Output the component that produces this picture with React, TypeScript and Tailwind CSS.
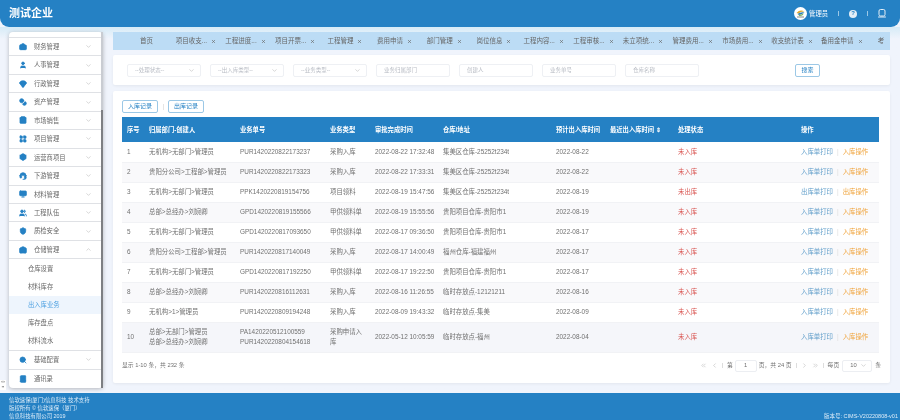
import { ChevronDown, ChevronUp, ChevronLeft, ChevronRight, ChevronsLeft, ChevronsRight, X, Briefcase, User, Gem, Coins, ShoppingBag, LayoutGrid, Box, Headset, Monitor, Users, Shield, Warehouse, SearchCheck, BookUser } from "lucide-react";

const font = "font-['Liberation_Sans','Noto_Sans_CJK_SC',sans-serif]";

const menuTop = [
  { name: "财务管理", icon: Briefcase },
  { name: "人事管理", icon: User },
  { name: "行政管理", icon: Gem },
  { name: "资产管理", icon: Coins },
  { name: "市场销售", icon: ShoppingBag },
  { name: "项目管理", icon: LayoutGrid },
  { name: "运营商项目", icon: Box },
  { name: "下游管理", icon: Headset },
  { name: "材料管理", icon: Monitor },
  { name: "工程队伍", icon: Users },
  { name: "质检安全", icon: Shield },
];

const subMenu = ["仓库设置", "材料库存", "出入库业务", "库存盘点", "材料流水"];

const tabs = ["项目收支...", "工程进度...", "项目开票...", "工程管理", "费用申请", "部门管理", "岗位信息", "工程内容...", "工程审核...", "未立项统...", "管理费用...", "市场费用...", "收支统计表", "备用金申请"];

const rows = [
  { id: 1, dept: ["无机构>无部门>管理员"], no: ["PUR1420220822173237"], type: "采购入库", time: "2022-08-22 17:32:48", wh: "集美区仓库-25252t234t", plan: "2022-08-22", status: "未入库" },
  { id: 2, dept: ["贵阳分公司>工程部>管理员"], no: ["PUR1420220822173323"], type: "采购入库", time: "2022-08-22 17:33:31", wh: "集美区仓库-25252t234t", plan: "2022-08-22", status: "未入库" },
  { id: 3, dept: ["无机构>无部门>管理员"], no: ["PPK1420220819154756"], type: "项目领料", time: "2022-08-19 15:47:56", wh: "集美区仓库-25252t234t", plan: "2022-08-19", status: "未出库" },
  { id: 4, dept: ["总部>总经办>刘婉卿"], no: ["GPD1420220819155566"], type: "甲供领料单", time: "2022-08-19 15:55:56", wh: "贵阳项目仓库-贵阳市1", plan: "2022-08-19", status: "未入库" },
  { id: 5, dept: ["无机构>无部门>管理员"], no: ["GPD1420220817093650"], type: "甲供领料单", time: "2022-08-17 09:36:50", wh: "贵阳项目仓库-贵阳市1", plan: "2022-08-17", status: "未入库" },
  { id: 6, dept: ["贵阳分公司>工程部>管理员"], no: ["PUR1420220817140049"], type: "采购入库", time: "2022-08-17 14:00:49", wh: "福州仓库-福建福州", plan: "2022-08-17", status: "未入库" },
  { id: 7, dept: ["无机构>无部门>管理员"], no: ["GPD1420220817192250"], type: "甲供领料单", time: "2022-08-17 19:22:50", wh: "贵阳项目仓库-贵阳市1", plan: "2022-08-17", status: "未入库" },
  { id: 8, dept: ["总部>总经办>刘婉卿"], no: ["PUR1420220816112631"], type: "采购入库", time: "2022-08-16 11:26:55", wh: "临时存放点-12121211", plan: "2022-08-16", status: "未入库" },
  { id: 9, dept: ["无机构>1>管理员"], no: ["PUR1420220809194248"], type: "采购入库", time: "2022-08-09 19:43:32", wh: "临时存放点-集美", plan: "2022-08-09", status: "未入库" },
  { id: 10, dept: ["总部>无部门>管理员", "总部>总经办>刘婉卿"], no: ["PA1420220512100559", "PUR1420220804154618"], type: "采购申请入库", time: "2022-05-12 10:05:59", wh: "临时存放点-福州", plan: "2022-08-04", status: "未入库" },
];

function MenuRow({ name, icon: Icon, open, last }: { name: string; icon: typeof User; open?: boolean; last?: boolean }) {
  return (
    <div className={`flex h-[18.7px] items-center pl-[10px] pr-[9px] ${last ? "" : "border-b border-[#dfe1e5]"}`}>
      <Icon size={8} strokeWidth={2.4} className="shrink-0 fill-[#2581c4] text-[#2581c4]" />
      <span className="ml-[7px] flex-1 text-[6.3px] text-[#666]">{name}</span>
      {last ? null : open ? <ChevronUp size={7} className="text-[#bbb]" /> : <ChevronDown size={7} className="text-[#bbb]" />}
    </div>
  );
}

function Select({ label }: { label: string }) {
  return (
    <div className="flex h-[13px] w-[74px] items-center justify-between rounded-[2px] border border-[#eef0f4] pl-[7px] pr-[5px]">
      <span className="text-[5.5px] text-[#b8bcc4]">{label}</span>
      <ChevronDown size={7} className="text-[#bbb]" />
    </div>
  );
}

function Input({ label }: { label: string }) {
  return (
    <div className="flex h-[13px] w-[74px] items-center rounded-[2px] border border-[#eef0f4] pl-[7px]">
      <span className="text-[5.5px] text-[#b8bcc4]">{label}</span>
    </div>
  );
}

function Logo() {
  return (
    <svg width="13" height="13" viewBox="0 0 26 26" className="shrink-0">
      <circle cx="13" cy="13" r="13" fill="#fff" />
      <path d="M5 12 Q12 4 21 9 Q14 8 9 13 Z" fill="#e0a92e" />
      <path d="M7 14 Q14 9 21 11 Q16 14 10 16 Z" fill="#2b7fb8" />
      <path d="M9 16 Q15 15 20 13 Q17 18 11 18 Z" fill="#6aa84f" />
      <rect x="6" y="19" width="14" height="2" fill="#888" />
    </svg>
  );
}

export default function App() {
  return (
    <div className={`relative flex h-[420px] w-[900px] flex-col overflow-hidden bg-[#f0f4fc] blur-[0.3px] ${font}`}>
      <header className="flex h-[27px] shrink-0 items-center rounded-b-[9px] bg-[#2581c4] pl-[9px] pr-[14px]">
        <span className="flex-1 text-[11px] font-bold text-white">测试企业</span>
        <Logo />
        <span className="ml-[2px] text-[6.3px] text-white">管理员</span>
        <span className="mx-[10px] h-[5px] w-px bg-[#9cc8e6]" />
        <span className="flex h-[8px] w-[8px] items-center justify-center rounded-full bg-[#e4eef6] text-[6px] font-bold text-[#2581c4]">?</span>
        <span className="mx-[10px] h-[5px] w-px bg-[#9cc8e6]" />
        <svg width="8" height="9" viewBox="0 0 16 18" fill="none" className="shrink-0">
          <rect x="2" y="1" width="12" height="13" rx="3" stroke="#e4eef6" strokeWidth="2" />
          <path d="M1 16h14" stroke="#e4eef6" strokeWidth="2" strokeLinecap="round" />
        </svg>
      </header>

      <main className="flex min-h-0 flex-1 bg-linear-to-b from-[#d6ebf7] to-[#f0f4fc] to-[12px] pb-[5px] pl-[9px] pr-[10px] pt-[5px]">
        <aside className="flex h-[356px] w-[94px] shrink-0 rounded-[4px] bg-white shadow-[0_1px_4px_rgba(0,0,0,0.25)]">
          <div className="flex min-w-0 flex-1 flex-col overflow-hidden pt-[5px]">
            <div className="border-b border-[#dfe1e5]" />
            {menuTop.map((m) => (
              <MenuRow key={m.name} name={m.name} icon={m.icon} />
            ))}
            <MenuRow name="仓储管理" icon={Warehouse} open />
            <div className="border-b border-[#dfe1e5]">
              {subMenu.map((s) => (
                <div
                  key={s}
                  className={`flex h-[18.2px] items-center pl-[19px] text-[6.3px] ${s === "出入库业务" ? "bg-[#eef5fd] text-[#4a9fe0]" : "text-[#666]"}`}
                >
                  {s}
                </div>
              ))}
            </div>
            <MenuRow name="基础配置" icon={SearchCheck} />
            <MenuRow name="通讯录" icon={BookUser} last />
          </div>
          <div className="flex w-[2px] shrink-0 flex-col bg-[#c9ccd2]">
            <div className="mt-[78px] flex-1 bg-[#7d7f83]" />
          </div>
        </aside>

        <div className="ml-[10px] flex min-w-0 flex-1 flex-col">
          <nav className="flex h-[18px] shrink-0 items-center overflow-hidden bg-[#bcdcf5]">
            <div className="w-[58px] shrink-0 pl-[27px] text-[6.5px] text-[#666]">首页</div>
            {tabs.map((t) => (
              <div key={t} className="flex w-[49.7px] shrink-0 items-center justify-center gap-[4px]">
                <span className="whitespace-nowrap text-[6.5px] text-[#666]">{t}</span>
                <X size={5} strokeWidth={3} className="text-[#666]" />
              </div>
            ))}
            <div className="ml-[11px] shrink-0 text-[6.5px] text-[#666]">考</div>
          </nav>

          <section className="mt-[5px] flex h-[30px] shrink-0 items-center rounded-[2px] bg-white pl-[14px] shadow-[0_1px_3px_rgba(0,0,0,0.06)]">
            <div className="flex gap-[9px]">
              <Select label="--处理状态--" />
              <Select label="--出入库类型--" />
              <Select label="--业务类型--" />
              <Input label="业务归属部门" />
              <Input label="创建人" />
              <Input label="业务单号" />
              <Input label="仓库名称" />
            </div>
            <button className="ml-[96px] flex h-[13px] w-[25px] items-center justify-center rounded-[2px] border border-[#9cc8e6] text-[6px] text-[#2581c4]">
              搜索
            </button>
          </section>

          <section className="mt-[6px] h-[292px] shrink-0 rounded-[2px] bg-white px-[9px] pt-[9px] shadow-[0_1px_3px_rgba(0,0,0,0.06)]">
            <div className="flex items-center">
              <button className="flex h-[13px] w-[36px] items-center justify-center rounded-[2px] border border-[#9cc8e6] text-[6px] text-[#2581c4]">
                入库记录
              </button>
              <span className="mx-[4.5px] h-[6px] w-px bg-[#e5e5e5]" />
              <button className="flex h-[13px] w-[36px] items-center justify-center rounded-[2px] border border-[#9cc8e6] text-[6px] text-[#2581c4]">
                出库记录
              </button>
            </div>

            <table className="mt-[4px] w-[757px] table-fixed border-collapse text-[6.4px] text-[#707070]">
              <colgroup>
                <col className="w-[27px]" />
                <col className="w-[91px]" />
                <col className="w-[90px]" />
                <col className="w-[45px]" />
                <col className="w-[68px]" />
                <col className="w-[113px]" />
                <col className="w-[54px]" />
                <col className="w-[68px]" />
                <col className="w-[123px]" />
                <col className="w-[78px]" />
              </colgroup>
              <thead>
                <tr className="h-[25px] bg-[#2581c4] text-left text-[6.3px] font-bold text-white">
                  <th className="pl-[5px]">序号</th>
                  <th>归属部门-创建人</th>
                  <th>业务单号</th>
                  <th>业务类型</th>
                  <th>审批完成时间</th>
                  <th>仓库/地址</th>
                  <th>预计出入库时间</th>
                  <th>最近出入库时间 ⇕</th>
                  <th>处理状态</th>
                  <th>操作</th>
                </tr>
              </thead>
              <tbody>
                {rows.map((r) => (
                  <tr
                    key={r.id}
                    className={`border-b border-[#f1f2f5] ${r.id === 10 ? "h-[30px] bg-[#f5f6fa]" : r.id % 2 === 0 ? "h-[20px] bg-[#f9f9fb]" : "h-[20px] bg-white"}`}
                  >
                    <td className="pl-[5px]">{r.id}</td>
                    <td>
                      {r.dept.map((d) => (
                        <div key={d} className="leading-[10.5px]">{d}</div>
                      ))}
                    </td>
                    <td>
                      {r.no.map((n) => (
                        <div key={n} className="leading-[10.5px]">{n}</div>
                      ))}
                    </td>
                    <td className="pr-[12px] leading-[10.5px]">{r.type}</td>
                    <td className="whitespace-nowrap">{r.time}</td>
                    <td>{r.wh}</td>
                    <td>{r.plan}</td>
                    <td />
                    <td className="text-[#d9534f]">{r.status}</td>
                    <td className="whitespace-nowrap">
                      <span className="text-[#5d9cc9]">{r.status === "未出库" ? "出库单打印" : "入库单打印"}</span>
                      <span className="mx-[4px] text-[#ddd]">|</span>
                      <span className="text-[#f0a33a]">{r.status === "未出库" ? "出库操作" : "入库操作"}</span>
                    </td>
                  </tr>
                ))}
              </tbody>
            </table>

            <div className="mt-[7px] flex w-[759px] items-center justify-between text-[5.8px] text-[#707070]">
              <span>显示 1-10 条，共 232 条</span>
              <div className="flex items-center">
                <ChevronsLeft size={7} className="text-[#bbb]" />
                <ChevronLeft size={7} className="ml-[4px] text-[#bbb]" />
                <span className="mx-[4px] h-[5px] w-px bg-[#ddd]" />
                <span>第</span>
                <span className="mx-[2px] flex h-[12px] w-[22px] items-center justify-center rounded-[2px] border border-[#eceef2]">1</span>
                <span>页，共 24 页</span>
                <span className="mx-[4px] h-[5px] w-px bg-[#ddd]" />
                <ChevronRight size={7} className="text-[#bbb]" />
                <ChevronsRight size={7} className="ml-[4px] text-[#bbb]" />
                <span className="mx-[4px] h-[5px] w-px bg-[#ddd]" />
                <span>每页</span>
                <span className="ml-[3px] flex h-[12px] w-[30px] items-center justify-between rounded-[2px] border border-[#eceef2] pl-[7px] pr-[4px]">
                  10
                  <ChevronDown size={7} className="text-[#bbb]" />
                </span>
                <span className="ml-[3px]">条</span>
              </div>
            </div>
          </section>
        </div>
      </main>

      <footer className="flex h-[27px] shrink-0 items-end justify-between bg-[#2581c4] pl-[9px] pr-[2px] text-[5.4px] leading-[8px] text-[#dcecf8]">
        <div>
          <div>信软速保(厦门)信息科技 技术支持</div>
          <div>版权所有 © 信软速保（厦门）</div>
          <div>信息科技有限公司 2019</div>
        </div>
        <div className="text-[5.5px]">版本号: CIMS-V20220808-v01</div>
      </footer>

      <div className="absolute left-0 top-[380px] flex h-[10px] w-[6px] flex-col items-center bg-white text-[3.5px] leading-[5px] text-[#666]">
        <span>&lt;&gt;</span>
        <span>▪▪</span>
      </div>
    </div>
  );
}
